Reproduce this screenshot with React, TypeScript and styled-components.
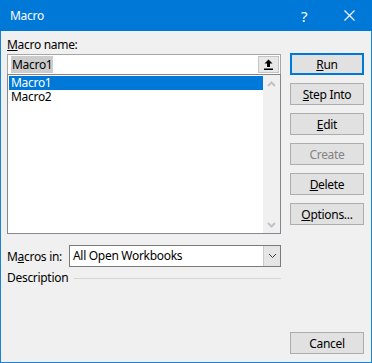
import React from 'react'
import styled, { createGlobalStyle } from 'styled-components'

const GlobalStyle = createGlobalStyle`
  html, body {
    margin: 0;
    padding: 0;
    background: #f0f0f0;
  }
  * {
    box-sizing: border-box;
  }
`

const Window = styled.div`
  width: 372px;
  height: 363px;
  display: flex;
  flex-direction: column;
  background: #f0f0f0;
  border: 1px solid #1883d7;
  border-top: none;
  font-family: "Noto Sans", "Open Sans", sans-serif;
  font-size: 12px;
  letter-spacing: -0.3px;
  color: #000000;
`

const TitleBar = styled.div`
  display: flex;
  align-items: center;
  height: 31px;
  margin: 0 -1px;
  padding-left: 10px;
  background: #0078d7;
  color: #ffffff;
`
const Title = styled.div`
  flex: 1;
  line-height: 16px;
`
const CaptionButton = styled.div<{ wide?: boolean }>`
  display: flex;
  align-items: center;
  justify-content: center;
  width: ${({ wide }) => (wide ? '46px' : '44px')};
  height: 31px;
  font-size: 15px;
`

const Body = styled.div`
  flex: 1;
  display: flex;
  padding: 6px 7px 0 6px;
`

const LeftColumn = styled.div`
  width: 274px;
  display: flex;
  flex-direction: column;
`
const RightColumn = styled.div`
  width: 74px;
  margin-left: 9px;
  padding: 16px 0 8px;
  display: flex;
  flex-direction: column;
`

const Label = styled.div`
  line-height: 16px;
`

const NameInput = styled.div`
  display: flex;
  align-items: center;
  height: 20px;
  margin-top: 1px;
  padding: 0 1px 0 3px;
  background: #ffffff;
  border: 1px solid #a6a6a6;
  border-bottom: none;
`
const Highlighted = styled.span`
  flex: 1;
  line-height: 13px;
  & > span {
    background: #cccccc;
    padding: 0 1px;
  }
`
const UploadButton = styled.div`
  display: flex;
  align-items: center;
  justify-content: center;
  width: 21px;
  height: 17px;
  background: #e8e8e8;
  border: 1px solid #c4c4c4;
`

const ListBox = styled.div`
  display: flex;
  height: 160px;
  background: #ffffff;
  border: 1px solid #828790;
`
const Items = styled.div`
  flex: 1;
  padding: 1px 0 0 1px;
`
const Item = styled.div<{ selected?: boolean }>`
  height: 14px;
  padding-left: 2px;
  line-height: 14px;
  background: ${({ selected }) => (selected ? '#0078d7' : 'transparent')};
  color: ${({ selected }) => (selected ? '#ffffff' : '#000000')};
`
const ScrollBar = styled.div`
  width: 17px;
  display: flex;
  flex-direction: column;
  justify-content: space-between;
  background: #f0f0f0;
`
const ScrollArrow = styled.div`
  display: flex;
  align-items: center;
  justify-content: center;
  height: 17px;
`

const MacrosRow = styled.div`
  display: flex;
  align-items: center;
  margin-top: 11px;
`
const RowLabel = styled.div`
  width: 62px;
`
const Select = styled.div`
  flex: 1;
  display: flex;
  height: 22px;
  background: #ffffff;
  border: 1px solid #7a7a7a;
`
const SelectValue = styled.div`
  flex: 1;
  padding-left: 3px;
  line-height: 20px;
`
const DropButton = styled.div`
  display: flex;
  align-items: center;
  justify-content: center;
  width: 17px;
  background: #e5e5e5;
  border-left: 1px solid #cccccc;
`

const DescriptionRow = styled.div`
  display: flex;
  align-items: center;
  margin-top: 3px;
  line-height: 16px;
`
const Separator = styled.div`
  flex: 1;
  height: 1px;
  margin-left: 6px;
  background: #d5d5d5;
`

const Button = styled.div<{ focused?: boolean; disabled?: boolean; push?: boolean }>`
  display: flex;
  align-items: center;
  justify-content: center;
  height: 22px;
  margin-bottom: 8px;
  margin-top: ${({ push }) => (push ? 'auto' : '0')};
  background: #e1e1e1;
  border: ${({ focused }) => (focused ? '2px solid #0078d7' : '1px solid #adadad')};
  color: ${({ disabled }) => (disabled ? '#838383' : '#000000')};
  &:last-child {
    margin-bottom: 0;
  }
`

const UpArrowIcon = () => (
  <svg width="9" height="11" viewBox="0 0 9 11">
    <path d="M4.5 0.5 L8.5 4.5 L6 4.5 L6 8 L3 8 L3 4.5 L0.5 4.5 Z" fill="#000000" />
    <rect x="0" y="9.5" width="9" height="1.5" fill="#000000" />
  </svg>
)

const Chevron = ({ up, color, width = 1.6 }: { up?: boolean; color: string; width?: number }) => (
  <svg width="9" height="6" viewBox="0 0 9 6">
    <path
      d={up ? 'M1 5 L4.5 1.5 L8 5' : 'M1 1 L4.5 4.5 L8 1'}
      fill="none"
      stroke={color}
      strokeWidth={width}
    />
  </svg>
)

const CloseIcon = () => (
  <svg width="11" height="11" viewBox="0 0 11 11">
    <path d="M0.5 0.5 L10.5 10.5 M10.5 0.5 L0.5 10.5" stroke="#ffffff" strokeWidth="1.1" />
  </svg>
)

const App: React.FC = () => (
  <>
    <GlobalStyle />
    <Window>
      <TitleBar>
        <Title>Macro</Title>
        <CaptionButton>?</CaptionButton>
        <CaptionButton wide>
          <CloseIcon />
        </CaptionButton>
      </TitleBar>
      <Body>
        <LeftColumn>
          <Label><u>M</u>acro name:</Label>
          <NameInput>
            <Highlighted><span>Macro1</span></Highlighted>
            <UploadButton>
              <UpArrowIcon />
            </UploadButton>
          </NameInput>
          <ListBox>
            <Items>
              <Item selected>Macro1</Item>
              <Item>Macro2</Item>
            </Items>
            <ScrollBar>
              <ScrollArrow><Chevron up color="#c2c2c2" width={2} /></ScrollArrow>
              <ScrollArrow><Chevron color="#c2c2c2" width={2} /></ScrollArrow>
            </ScrollBar>
          </ListBox>
          <MacrosRow>
            <RowLabel>M<u>a</u>cros in:</RowLabel>
            <Select>
              <SelectValue>All Open Workbooks</SelectValue>
              <DropButton><Chevron color="#404040" width={1} /></DropButton>
            </Select>
          </MacrosRow>
          <DescriptionRow>
            Description
            <Separator />
          </DescriptionRow>
        </LeftColumn>
        <RightColumn>
          <Button focused><span><u>R</u>un</span></Button>
          <Button><span><u>S</u>tep Into</span></Button>
          <Button><span><u>E</u>dit</span></Button>
          <Button disabled>Create</Button>
          <Button><span><u>D</u>elete</span></Button>
          <Button><span><u>O</u>ptions...</span></Button>
          <Button push>Cancel</Button>
        </RightColumn>
      </Body>
    </Window>
  </>
)

export default App
